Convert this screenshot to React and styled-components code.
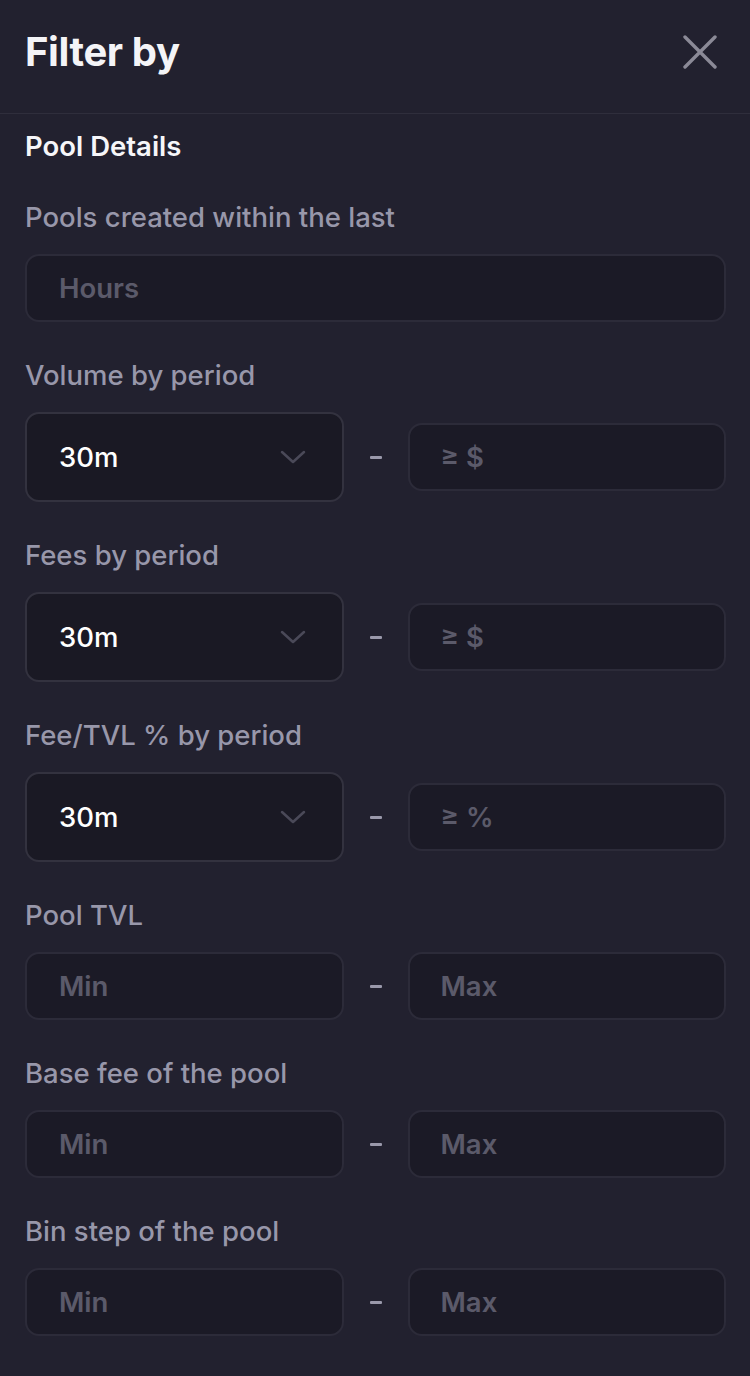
import React from "react";
import styled, { createGlobalStyle } from "styled-components";

const Global = createGlobalStyle`
  html, body {
    margin: 0;
    padding: 0;
    background: #22212f;
  }
  * { box-sizing: border-box; }
`;

// PANEL
const Panel = styled.div`
  width: 750px;
  min-height: 1376px;
  background: #22212f;
  font-family: Inter, "Noto Sans", sans-serif;
  color: #ffffff;
`;

// HEADER
const Header = styled.div`
  height: 114px;
  display: flex;
  align-items: center;
  justify-content: space-between;
  padding: 0 32px 10px 25px;
  border-bottom: 1px solid #2f2e3c;
`;

const Title = styled.h1`
  margin: 0;
  font-size: 40px;
  font-weight: 700;
  letter-spacing: -0.4px;
  color: #f4f4f7;
`;

const CloseButton = styled.button`
  background: none;
  border: 0;
  padding: 0;
  width: 36px;
  height: 36px;
  display: flex;
  align-items: center;
  justify-content: center;
  cursor: pointer;
`;

// BODY
const Body = styled.div`
  padding: 16px 24px 40px 25px;
  display: flex;
  flex-direction: column;
`;

const SectionTitle = styled.h2`
  margin: 0 0 39px;
  font-size: 27.5px;
  line-height: 32px;
  font-weight: 600;
  color: #f6f6f9;
  letter-spacing: 0;
`;

const Field = styled.div`
  display: flex;
  flex-direction: column;
  margin-bottom: 37px;
`;

const Label = styled.div`
  font-size: 27.5px;
  line-height: 32px;
  font-weight: 500;
  color: #9897aa;
  margin-bottom: 21px;
`;

const Row = styled.div`
  display: grid;
  grid-template-columns: 1fr 64px 1fr;
  align-items: center;
`;

const Dash = styled.span`
  justify-self: center;
  width: 12px;
  height: 3px;
  border-radius: 1px;
  background: #9a99ab;
`;

const Input = styled.div`
  height: 68px;
  border-radius: 14px;
  border: 2px solid #2c2b39;
  background: #1b1a26;
  display: flex;
  align-items: center;
  padding-left: ${(p) => (p.$right ? "31px" : "32px")};
  font-size: 27.5px;
  font-weight: 600;
  color: #5b5a6a;
`;

const Select = styled.div`
  height: 90px;
  border-radius: 14px;
  border: 2px solid #33323f;
  background: #1a1924;
  display: flex;
  align-items: center;
  justify-content: space-between;
  padding: 0 36px 0 32px;
  font-size: 27.5px;
  font-weight: 500;
  color: #ffffff;
`;

const Chevron = () => (
  <svg width="26" height="16" viewBox="0 0 26 16" fill="none">
    <path d="M2 3 L13 13 L24 3" stroke="#4a4958" strokeWidth="2.5" strokeLinecap="round" strokeLinejoin="round" />
  </svg>
);

const CloseIcon = () => (
  <svg width="34" height="34" viewBox="0 0 34 34" fill="none">
    <path d="M2 2 L32 32 M32 2 L2 32" stroke="#8b8a97" strokeWidth="3.4" strokeLinecap="round" />
  </svg>
);

const periodFields = [
  { label: "Volume by period", placeholder: "≥ $" },
  { label: "Fees by period", placeholder: "≥ $" },
  { label: "Fee/TVL % by period", placeholder: "≥ %" },
];

const rangeFields = ["Pool TVL", "Base fee of the pool", "Bin step of the pool"];

export default function App() {
  return (
    <Panel>
      <Global />
      <Header>
        <Title>Filter by</Title>
        <CloseButton aria-label="Close">
          <CloseIcon />
        </CloseButton>
      </Header>
      <Body>
        <SectionTitle>Pool Details</SectionTitle>

        <Field>
          <Label>Pools created within the last</Label>
          <Input>Hours</Input>
        </Field>

        {periodFields.map((f) => (
          <Field key={f.label}>
            <Label>{f.label}</Label>
            <Row>
              <Select>
                <span>30m</span>
                <Chevron />
              </Select>
              <Dash />
              <Input $right>{f.placeholder}</Input>
            </Row>
          </Field>
        ))}

        {rangeFields.map((label) => (
          <Field key={label}>
            <Label>{label}</Label>
            <Row>
              <Input>Min</Input>
              <Dash />
              <Input $right>Max</Input>
            </Row>
          </Field>
        ))}
      </Body>
    </Panel>
  );
}
